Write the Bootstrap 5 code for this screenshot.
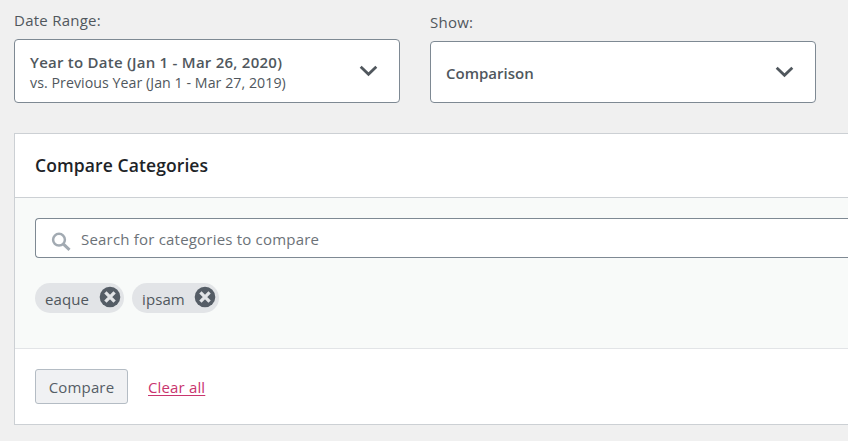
<!DOCTYPE html>
<html lang="en">
<head>
<meta charset="utf-8">
<meta name="viewport" content="width=device-width, initial-scale=1">
<title>Compare Categories</title>
<link href="https://cdn.jsdelivr.net/npm/bootstrap@5.3.0/dist/css/bootstrap.min.css" rel="stylesheet">
<style>
  body { background: #f0f0f0; color: #50575d; font-family: "Open Sans", "Noto Sans", sans-serif; font-size: 15px; line-height: 20px; height: 441px; }
  .filters { padding: 10px 0 0 14px; gap: 30px; height: 103px; }
  .filter { width: 386px; }
  .filter-show { padding-top: 2px; }
  .filter-label { height: 20px; margin-bottom: 9px; letter-spacing: .25px; }
  .picker { --bs-btn-border-radius: 4px; background: #fff !important; border: 1px solid #7e8993 !important; color: #50575d !important; padding: 2px 21px 0 15px; font-size: 15px; line-height: 20px; height: 64px; }
  .picker svg { margin-top: -2px; }
  .picker.single { height: 62px; }
  .panel { height: 292px; margin: 30px 0 0 14px; border: 1px solid #ccd0d4; border-radius: 0; }
  .panel-title { height: 64px; padding: 0 20px 2px; background: #fff; border-bottom: 1px solid #ccd0d4; color: #1d2327; font-weight: 600; font-size: 17.5px; letter-spacing: .1px; }
  .panel-main { height: 151px; padding: 20px 0 20px 20px; background: #f8faf9; border-bottom: 1px solid #e2e4e7; flex: none; }
  .search { height: 40px; border: 1px solid #7e8993; border-radius: 4px 0 0 4px; background: #fff; padding: 0 15px; }
  .search input, .search input:focus { font-size: 15px; line-height: 20px; letter-spacing: .2px; color: #6c7278; box-shadow: none; background: none; margin-left: 10px; padding: 1px 0 0; height: 40px; }
  .search input::placeholder { color: #6c7278; }
  .search svg { margin-top: 8px; }
  .tags { margin-top: 25px; gap: 8px; }
  .tag { height: 30px; border-radius: 15px; background: #e2e4e7; padding: 0 3.5px 0 10px; width: 89px; }
  .tag-short { width: 87px; }
  .tag span { padding-top: 1px; letter-spacing: .1px; }
  .tag button { line-height: 0; margin-top: -2px; }
  .panel-foot { padding: 0 20px; height: 75px; background: #fff; gap: 20px; }
  .compare { width: 93px; height: 35px; padding: 1px 0 0; border: 1px solid #b4bcc4 !important; border-radius: 3px; background: #f0f1f3 !important; color: #555d66 !important; font-size: 15px; line-height: 33px; letter-spacing: .15px; }
  .clear { color: #c9356e; text-underline-offset: 2px; letter-spacing: .15px; padding-top: 1px; }
  .t { display: inline-block; white-space: nowrap; }
  .t-range { letter-spacing: .25px; }
  .t-sub { font-size: 14.2px; letter-spacing: .05px; }
</style>
</head>
<body class="overflow-hidden">
  <div class="filters d-flex align-items-start">
    <div class="filter">
      <div class="filter-label"><span class="t">Date Range:</span></div>
      <button type="button" class="btn picker w-100 d-flex align-items-center justify-content-between text-start">
        <span><strong class="t t-range fw-semibold">Year to Date (Jan 1 - Mar 26, 2020)</strong><br><span class="t t-sub">vs. Previous Year (Jan 1 - Mar 27, 2019)</span></span>
        <svg width="19" height="12" viewBox="0 0 19 12" fill="none" stroke="#50575d" stroke-width="2.8"><path d="M1.7 1.8 9.5 9.3l7.8-7.5"/></svg>
      </button>
    </div>
    <div class="filter filter-show">
      <div class="filter-label"><span class="t">Show:</span></div>
      <button type="button" class="btn picker single w-100 d-flex align-items-center justify-content-between text-start">
        <strong class="t fw-semibold">Comparison</strong>
        <svg width="19" height="12" viewBox="0 0 19 12" fill="none" stroke="#50575d" stroke-width="2.8"><path d="M1.7 1.8 9.5 9.3l7.8-7.5"/></svg>
      </button>
    </div>
  </div>

  <section class="card panel border-end-0">
    <header class="panel-title d-flex align-items-center"><span class="t">Compare Categories</span></header>
    <div class="panel-main">
      <div class="search border-end-0 d-flex align-items-center">
        <svg class="flex-shrink-0" width="20" height="20" viewBox="0 0 20 20" fill="none" stroke="#a2aab2"><circle cx="8" cy="7.7" r="5.9" stroke-width="2.5"/><path d="m12.2 11.9 6.3 6" stroke-width="3"/></svg>
        <input class="form-control border-0" type="text" placeholder="Search for categories to compare">
      </div>
      <div class="tags d-flex">
        <div class="tag d-flex align-items-center justify-content-between"><span class="t">eaque</span>
          <button class="btn p-0 border-0" aria-label="Remove eaque"><svg width="22" height="22" viewBox="0 0 22 22"><circle cx="11" cy="11" r="10.3" fill="#555d66"/><path d="m6.4 6.4 9.2 9.2m0-9.2-9.2 9.2" stroke="#e2e4e7" stroke-width="3.3"/></svg></button></div>
        <div class="tag tag-short d-flex align-items-center justify-content-between"><span class="t">ipsam</span>
          <button class="btn p-0 border-0" aria-label="Remove ipsam"><svg width="22" height="22" viewBox="0 0 22 22"><circle cx="11" cy="11" r="10.3" fill="#555d66"/><path d="m6.4 6.4 9.2 9.2m0-9.2-9.2 9.2" stroke="#e2e4e7" stroke-width="3.3"/></svg></button></div>
      </div>
    </div>
    <footer class="panel-foot d-flex align-items-center">
      <button type="button" class="btn compare">Compare</button>
      <a href="#" class="clear t">Clear all</a>
    </footer>
  </section>
<script src="https://cdn.jsdelivr.net/npm/bootstrap@5.3.0/dist/js/bootstrap.bundle.min.js"></script>
</body>
</html>
